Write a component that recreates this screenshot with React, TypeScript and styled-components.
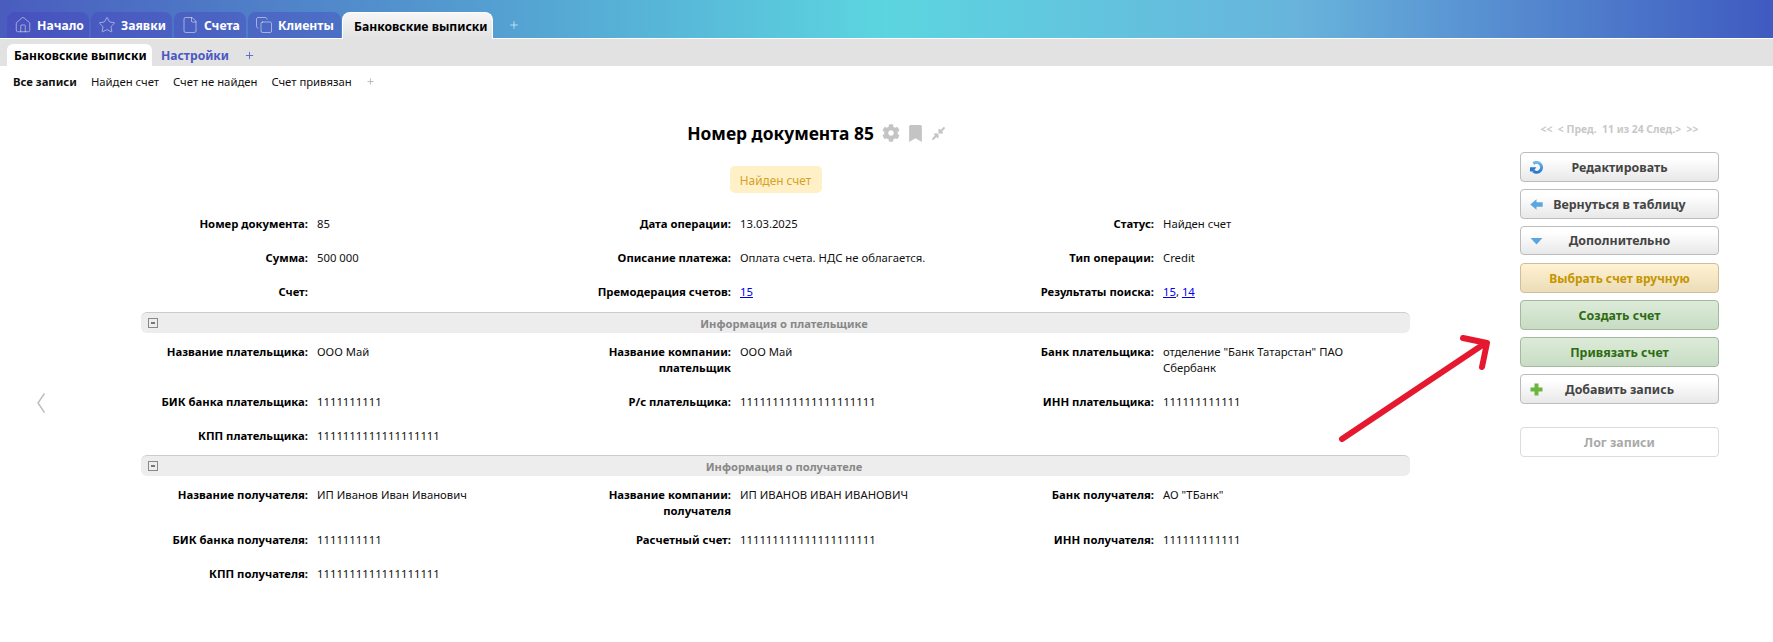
import React from "react";
import styled, { createGlobalStyle } from "styled-components";
import { House, Star, File, Copy, Plus } from "lucide-react";
import { FaCog, FaBookmark, FaCompressAlt } from "react-icons/fa";

const Global = createGlobalStyle`
  html, body { margin: 0; padding: 0; background: #fff; }
  body { font-family: "Noto Sans", "Open Sans", sans-serif; font-size: 11.3px; color: #111; }
  * { box-sizing: border-box; }
`;

const Page = styled.div`
  position: relative;
  width: 1773px;
  height: 642px;
  overflow: hidden;
`;

const TopBar = styled.div`
  height: 38px;
  padding: 12px 0 0 7px;
  display: flex;
  align-items: stretch;
  gap: 2px;
  background: linear-gradient(90deg, #4a5cbe 0%, #5cd5e0 50%, #68b4dc 73%, #3f5ac0 100%);
`;

const MainTab = styled.div<{ $active?: boolean; $w: number }>`
  width: ${(p) => p.$w}px;
  display: flex;
  align-items: center;
  gap: 5px;
  padding-left: ${(p) => (p.$active ? 11 : 7)}px;
  border-radius: 8px 8px 0 0;
  font-size: 12.2px;
  font-weight: 700;
  white-space: nowrap;
  color: ${(p) => (p.$active ? "#000" : "#fff")};
  background: ${(p) => (p.$active ? "linear-gradient(#f6f6f6, #e2e2e2)" : "rgba(70, 60, 190, 0.35)")};
  border: ${(p) => (p.$active ? "1px solid #fff" : "none")};
  border-bottom: none;
  margin-left: ${(p) => (p.$active ? -1 : 0)}px;
  margin-bottom: ${(p) => (p.$active ? -1 : 0)}px;
  position: ${(p) => (p.$active ? "relative" : "static")};
  z-index: ${(p) => (p.$active ? 1 : "auto")};
  svg { color: rgba(255, 255, 255, 0.55); flex: none; }
`;

const TabAdd = styled.div`
  display: flex;
  align-items: center;
  margin-left: 13px;
  color: rgba(255, 255, 255, 0.6);
`;

const SubBar = styled.div`
  height: 28px;
  border-top: 1px solid #fff;
  background: #e2e2e2;
  padding: 5px 0 0 7px;
  display: flex;
  align-items: stretch;
`;

const SubTab = styled.div<{ $active?: boolean }>`
  display: flex;
  align-items: center;
  padding: 0 ${(p) => (p.$active ? 7 : 8)}px;
  width: ${(p) => (p.$active ? "145px" : "auto")};
  border-radius: 6px 6px 0 0;
  font-size: 12.1px;
  font-weight: 700;
  white-space: nowrap;
  color: ${(p) => (p.$active ? "#000" : "#4a58c4")};
  background: ${(p) => (p.$active ? "#fff" : "transparent")};
  margin-right: ${(p) => (p.$active ? "1px" : "0")};
`;

const SubAdd = styled.div`
  display: flex;
  align-items: center;
  margin-left: 7px;
  color: #5a68c8;
`;

const FilterRow = styled.div`
  height: 32px;
  padding: 0 0 2px 13px;
  display: flex;
  align-items: center;
  font-size: 11.3px;
  gap: 14px;
`;

const FilterItem = styled.span<{ $active?: boolean }>`
  font-weight: ${(p) => (p.$active ? 700 : 400)};
  white-space: nowrap;
`;

const FilterAdd = styled.span`
  display: flex;
  align-items: center;
  color: #aaa;
`;

const Body = styled.div`
  display: flex;
  align-items: flex-start;
`;

const Gutter = styled.div`
  width: 141px;
  flex: none;
  padding: 295px 0 0 37px;
  color: #bdbdbd;
  line-height: 0;
`;

const Center = styled.div`
  width: 1269px;
  flex: none;
`;

const TitleRow = styled.div`
  height: 30px;
  margin-top: 20px;
  display: flex;
  align-items: center;
  justify-content: center;
  padding-left: 82px;
  gap: 8px;
`;

const Title = styled.h1`
  margin: 0;
  font-size: 17.4px;
  font-weight: 700;
  color: #000;
  white-space: nowrap;
`;

const TitleIcons = styled.div`
  display: flex;
  align-items: center;
  gap: 7px;
  color: #c4c4c4;
`;

const BadgeRow = styled.div`
  display: flex;
  justify-content: center;
  padding-top: 18px;
`;

const Badge = styled.div`
  width: 92px;
  height: 27px;
  border-radius: 5px;
  background: #fff0c8;
  color: #d6a11e;
  font-size: 11.8px;
  display: flex;
  align-items: center;
  justify-content: center;
  white-space: nowrap;
`;

const Grid = styled.div<{ $top?: number; $bottom?: number; $firstBottom?: number }>`
  display: grid;
  grid-template-columns: repeat(3, 423px);
  padding-top: ${(p) => p.$top ?? 0}px;
  padding-bottom: ${(p) => p.$bottom ?? 0}px;
  & > div:nth-child(-n + 3) {
    padding-bottom: ${(p) => p.$firstBottom ?? 9}px;
  }
`;

const Field = styled.div`
  display: grid;
  grid-template-columns: 167px 1fr;
  column-gap: 9px;
  padding: 9px 0;
  line-height: 16px;
`;

const Label = styled.div`
  font-weight: 700;
  text-align: right;
  color: #000;
`;

const Value = styled.div`
  padding-right: 40px;
  color: #111;
  a { color: #0000ee; text-decoration: underline; }
`;

const Section = styled.div`
  height: 21px;
  margin: 2px 0;
  display: flex;
  align-items: center;
  padding-left: 7px;
  border-top: 1px solid #ccc;
  border-radius: 6px;
  background: #ededed;
`;

const Toggle = styled.span`
  width: 10px;
  height: 10px;
  flex: none;
  border: 1px solid #888;
  display: flex;
  align-items: center;
  justify-content: center;
  &::before { content: ""; width: 4px; height: 2px; background: #777; }
`;

const SectionTitle = styled.div`
  flex: 1;
  text-align: center;
  font-weight: 700;
  font-size: 11.2px;
  color: #888;
`;

const Side = styled.div`
  width: 199px;
  margin-left: 110px;
  flex: none;
  display: flex;
  flex-direction: column;
  gap: 7px;
`;

const Pager = styled.div`
  height: 47px;
  padding-top: 24px;
  text-align: center;
  font-size: 10.4px;
  font-weight: 700;
  color: #c8c8c8;
  white-space: nowrap;
`;

type Tone = "plain" | "yellow" | "green" | "ghost";
const tones: Record<Tone, { bg: string; border: string; color: string }> = {
  plain: { bg: "linear-gradient(#ffffff 20%, #e8e8e8)", border: "#bcbcbc", color: "#444" },
  yellow: { bg: "linear-gradient(#fff2d2, #ecdcb8)", border: "#cdbf9b", color: "#c49500" },
  green: { bg: "linear-gradient(#dcebd8, #c8dcc4)", border: "#a5b8a0", color: "#2e6b12" },
  ghost: { bg: "#fff", border: "#dcdcdc", color: "#aaa" },
};

const Btn = styled.div<{ $tone: Tone; $h?: number; $mt?: number }>`
  height: ${(p) => p.$h ?? 30}px;
  margin-top: ${(p) => p.$mt ?? 0}px;
  display: grid;
  grid-template-columns: 24px 1fr 24px;
  align-items: center;
  border: 1px solid ${(p) => tones[p.$tone].border};
  border-radius: 4px;
  background: ${(p) => tones[p.$tone].bg};
  color: ${(p) => tones[p.$tone].color};
  font-size: ${(p) => (p.$tone === "yellow" ? 12 : 12.4)}px;
  font-weight: 700;
  white-space: nowrap;
`;

const BtnIcon = styled.span`
  display: flex;
  padding-left: 9px;
`;

const BtnText = styled.span`
  text-align: center;
`;

const ArrowOverlay = styled.svg`
  position: absolute;
  left: 1330px;
  top: 330px;
  pointer-events: none;
`;

const RefreshIcon = () => (
  <svg width="13" height="13" viewBox="0 0 13 13" style={{ flex: "none" }}>
    <defs>
      <linearGradient id="rf" x1="0" y1="0" x2="0" y2="1">
        <stop offset="0" stopColor="#6fb6ea" />
        <stop offset="1" stopColor="#2a79cc" />
      </linearGradient>
    </defs>
    <path d="M3.4 2.6A4.9 4.9 0 1 1 3.4 10" fill="none" stroke="url(#rf)" strokeWidth="3" />
    <path d="M0 6.2H6.4L3.2 10.5 0 10.5Z" fill="#2a79cc" />
  </svg>
);
const BackIcon = () => (
  <svg width="13" height="13" viewBox="0 0 13 13" style={{ flex: "none" }}>
    <path d="M0.3 6.5L6.5 1.2V4.2H12.7V8.8H6.5V11.8Z" fill="#5aa6e0" />
  </svg>
);
const DownIcon = () => (
  <svg width="13" height="13" viewBox="0 0 13 13" style={{ flex: "none" }}>
    <path d="M0.5 4H12.5L6.5 10.5Z" fill="#5aa6e0" />
  </svg>
);
const AddIcon = () => (
  <svg width="13" height="13" viewBox="0 0 13 13" style={{ flex: "none" }}>
    <path d="M4.5 0.5H8.5V4.5H12.5V8.5H8.5V12.5H4.5V8.5H0.5V4.5H4.5Z" fill="#6cb33f" />
  </svg>
);

type F = { l: string; v?: React.ReactNode };
const Fields = ({ items, top, bottom, firstBottom }: { items: F[]; top?: number; bottom?: number; firstBottom?: number }) => (
  <Grid $top={top} $bottom={bottom} $firstBottom={firstBottom}>
    {items.map((f, i) => (
      <Field key={i}>
        <Label>{f.l}</Label>
        <Value>{f.v}</Value>
      </Field>
    ))}
  </Grid>
);

const main: F[] = [
  { l: "Номер документа:", v: "85" },
  { l: "Дата операции:", v: "13.03.2025" },
  { l: "Статус:", v: "Найден счет" },
  { l: "Сумма:", v: "500 000" },
  { l: "Описание платежа:", v: "Оплата счета. НДС не облагается." },
  { l: "Тип операции:", v: "Credit" },
  { l: "Счет:" },
  { l: "Премодерация счетов:", v: <a href="#">15</a> },
  { l: "Результаты поиска:", v: <><a href="#">15</a>, <a href="#">14</a></> },
];
const payer: F[] = [
  { l: "Название плательщика:", v: "ООО Май" },
  { l: "Название компании: плательщик", v: "ООО Май" },
  { l: "Банк плательщика:", v: 'отделение "Банк Татарстан" ПАО Сбербанк' },
  { l: "БИК банка плательщика:", v: "1111111111" },
  { l: "Р/с плательщика:", v: "111111111111111111111" },
  { l: "ИНН плательщика:", v: "111111111111" },
  { l: "КПП плательщика:", v: "1111111111111111111" },
];
const payee: F[] = [
  { l: "Название получателя:", v: "ИП Иванов Иван Иванович" },
  { l: "Название компании: получателя", v: "ИП ИВАНОВ ИВАН ИВАНОВИЧ" },
  { l: "Банк получателя:", v: 'АО "ТБанк"' },
  { l: "БИК банка получателя:", v: "1111111111" },
  { l: "Расчетный счет:", v: "111111111111111111111" },
  { l: "ИНН получателя:", v: "111111111111" },
  { l: "КПП получателя:", v: "1111111111111111111" },
];

export default function App() {
  return (
    <Page>
      <Global />
      <TopBar>
        <MainTab $w={82}><House size={18} strokeWidth={1.2} />Начало</MainTab>
        <MainTab $w={81}><Star size={18} strokeWidth={1.2} />Заявки</MainTab>
        <MainTab $w={72}><File size={18} strokeWidth={1.2} />Счета</MainTab>
        <MainTab $w={93}><Copy size={18} strokeWidth={1.2} />Клиенты</MainTab>
        <MainTab $active $w={151}>Банковские выписки</MainTab>
        <TabAdd><Plus size={12} strokeWidth={2} /></TabAdd>
      </TopBar>
      <SubBar>
        <SubTab $active>Банковские выписки</SubTab>
        <SubTab>Настройки</SubTab>
        <SubAdd><Plus size={11} strokeWidth={2} /></SubAdd>
      </SubBar>
      <FilterRow>
        <FilterItem $active>Все записи</FilterItem>
        <FilterItem>Найден счет</FilterItem>
        <FilterItem>Счет не найден</FilterItem>
        <FilterItem>Счет привязан</FilterItem>
        <FilterAdd><Plus size={9} strokeWidth={2} /></FilterAdd>
      </FilterRow>
      <Body>
        <Gutter>
          <svg width="8" height="20" viewBox="0 0 8 20">
            <path d="M7.5 0.5L1 10L7.5 19.5" fill="none" stroke="currentColor" strokeWidth="1.5" />
          </svg>
        </Gutter>
        <Center>
          <TitleRow>
            <Title>Номер документа 85</Title>
            <TitleIcons>
              <FaCog size={18} />
              <FaBookmark size={17} />
              <FaCompressAlt size={15} />
            </TitleIcons>
          </TitleRow>
          <BadgeRow><Badge>Найден счет</Badge></BadgeRow>
          <Fields items={main} top={14} bottom={1} />
          <Section><Toggle /><SectionTitle>Информация о плательщике</SectionTitle></Section>
          <Fields items={payer} />
          <Section><Toggle /><SectionTitle>Информация о получателе</SectionTitle></Section>
          <Fields items={payee} firstBottom={4} />
        </Center>
        <Side>
          <Pager>&lt;&lt;&nbsp; &lt; Пред.&nbsp; 11 из 24 След.&gt;&nbsp; &gt;&gt;</Pager>
          <Btn $tone="plain"><BtnIcon><RefreshIcon /></BtnIcon><BtnText>Редактировать</BtnText></Btn>
          <Btn $tone="plain"><BtnIcon><BackIcon /></BtnIcon><BtnText>Вернуться в таблицу</BtnText></Btn>
          <Btn $tone="plain" $h={29}><BtnIcon><DownIcon /></BtnIcon><BtnText>Дополнительно</BtnText></Btn>
          <Btn $tone="yellow" $mt={1}><span /><BtnText>Выбрать счет вручную</BtnText></Btn>
          <Btn $tone="green"><span /><BtnText>Создать счет</BtnText></Btn>
          <Btn $tone="green"><span /><BtnText>Привязать счет</BtnText></Btn>
          <Btn $tone="plain"><BtnIcon><AddIcon /></BtnIcon><BtnText>Добавить запись</BtnText></Btn>
          <Btn $tone="ghost" $mt={16}><span /><BtnText>Лог записи</BtnText></Btn>
        </Side>
      </Body>
      <ArrowOverlay width="170" height="120" viewBox="1330 330 170 120">
        <path d="M1342 439L1484 344M1463 338L1487 343L1482 367" fill="none" stroke="#e5182f" strokeWidth="6" strokeLinecap="round" strokeLinejoin="round" />
      </ArrowOverlay>
    </Page>
  );
}
